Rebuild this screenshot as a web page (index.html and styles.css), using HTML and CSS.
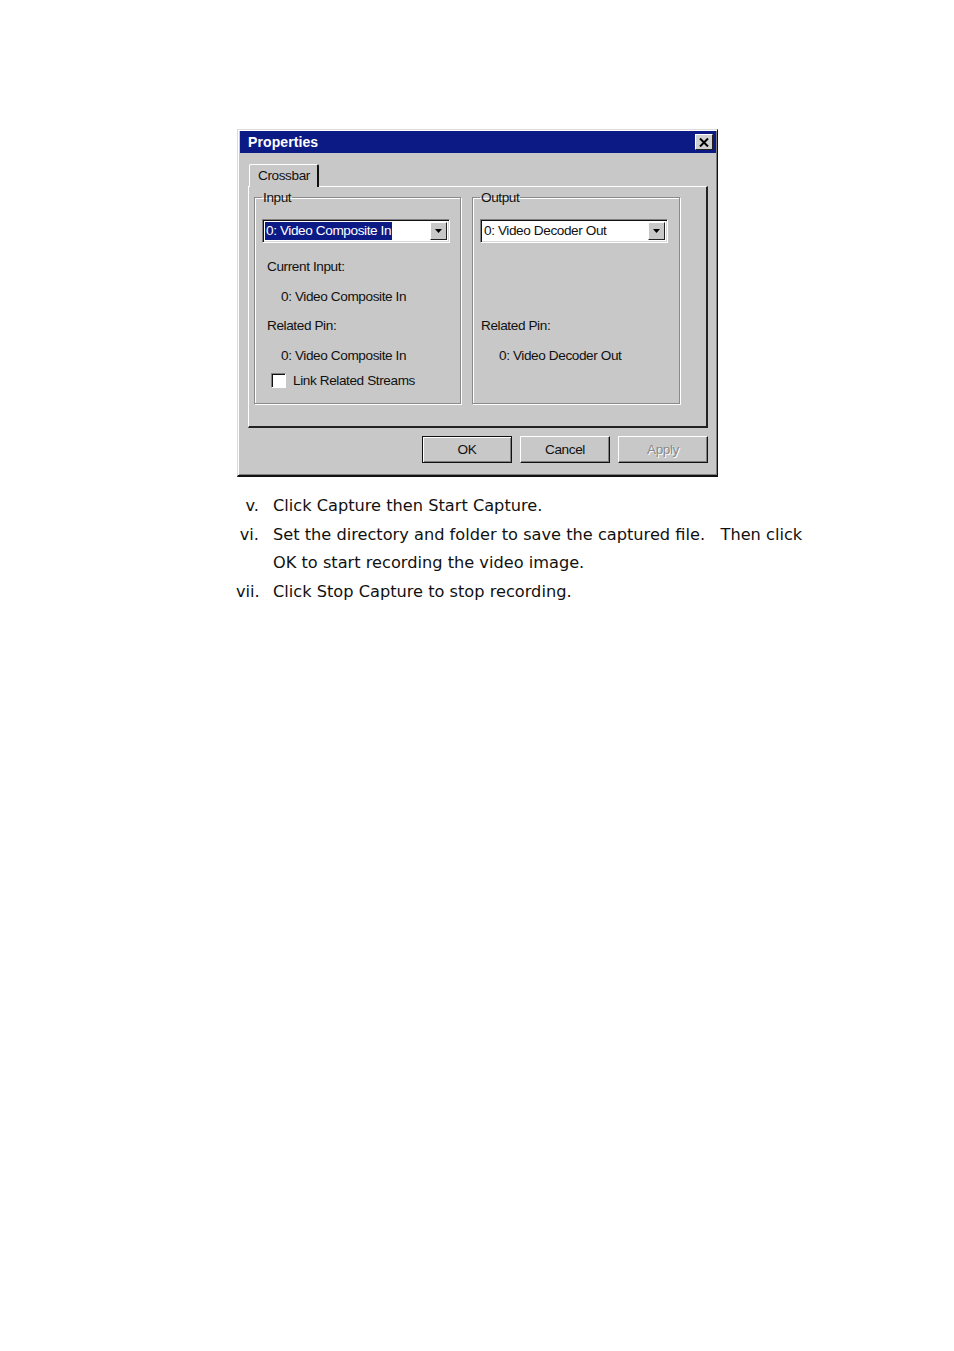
FILE: index.html
```html
<!DOCTYPE html>
<html>
<head>
<meta charset="utf-8">
<link rel="stylesheet" href="styles.css">
</head>
<body>
<div class="page">
  <div class="dialog">
    <div class="titlebar">
      <span class="title">Properties</span>
      <span class="closebtn"><svg width="10" height="9" viewBox="0 0 10 9"><path d="M1 0.5 L9 8.5 M9 0.5 L1 8.5" stroke="#000" stroke-width="2"/></svg></span>
    </div>
    <div class="dlgbody">
      <div class="tabs"><div class="tab">Crossbar</div></div>
      <div class="panel">
        <fieldset class="group group-in">
          <legend>Input</legend>
          <div class="combo"><span class="combo-text sel">0: Video Composite In</span><span class="dd"><svg width="8" height="5" viewBox="0 0 8 5"><path d="M0 0 H7 L3.5 4 Z" fill="#000"/></svg></span></div>
          <div class="rows">
            <div class="row lbl">Current Input:</div>
            <div class="row val">0: Video Composite In</div>
            <div class="row lbl">Related Pin:</div>
            <div class="row val">0: Video Composite In</div>
            <div class="row chk"><span class="box"></span>Link Related Streams</div>
          </div>
        </fieldset>
        <fieldset class="group group-out">
          <legend>Output</legend>
          <div class="combo"><span class="combo-text">0: Video Decoder Out</span><span class="dd"><svg width="8" height="5" viewBox="0 0 8 5"><path d="M0 0 H7 L3.5 4 Z" fill="#000"/></svg></span></div>
          <div class="rows out-rows">
            <div class="row lbl">Related Pin:</div>
            <div class="row val val-out">0: Video Decoder Out</div>
          </div>
        </fieldset>
      </div>
      <div class="buttons">
        <div class="btn btn-default">OK</div>
        <div class="btn">Cancel</div>
        <div class="btn disabled">Apply</div>
      </div>
    </div>
  </div>
  <div class="steps">
    <div class="step"><span class="num">v.</span><span class="txt">Click Capture then Start Capture.</span></div>
    <div class="step"><span class="num">vi.</span><span class="txt">Set the directory and folder to save the captured file.&nbsp;&nbsp; Then click OK to start recording the video image.</span></div>
    <div class="step"><span class="num">vii.</span><span class="txt">Click Stop Capture to stop recording.</span></div>
  </div>
</div>
</body>
</html>
```
FILE: styles.css
```css
html, body { margin: 0; padding: 0; background: #fff; }
.page { padding: 129px 0 0 237px; }

.dialog {
  width: 481px;
  height: 348px;
  box-sizing: border-box;
  background: #c8c8c8;
  border-top: 1px solid #dcdcdc;
  border-left: 1px solid #dcdcdc;
  border-right: 1px solid #111;
  border-bottom: 2px solid #111;
  box-shadow: inset 1px 1px 0 #fff, inset -1px -1px 0 #808080;
  padding: 1px 1px 0 2px;
  font-family: "Liberation Sans", Arial, sans-serif;
  font-size: 13.6px;
  letter-spacing: -0.4px;
  color: #111;
}

.titlebar {
  height: 22px;
  background: #0c1a86;
  display: flex;
  align-items: center;
  justify-content: space-between;
  padding: 0 3px 0 8px;
}
.title { color: #fff; font-weight: bold; font-size: 14px; letter-spacing: 0.1px; }
.closebtn {
  width: 18px; height: 16px;
  box-sizing: border-box;
  background: #d0d0d0;
  border-top: 1px solid #fff; border-left: 1px solid #fff;
  border-right: 1px solid #222; border-bottom: 1px solid #222;
  display: flex; align-items: center; justify-content: center;
}

.dlgbody { padding: 11px 0 0 8px; }
.tabs { display: flex; padding-left: 1px; }
.tab {
  height: 23px;
  box-sizing: border-box;
  padding: 3px 7px 0 8px;
  border-top: 1px solid #fff; border-left: 1px solid #fff;
  border-right: 2px solid #111;
  border-radius: 2px 2px 0 0;
  background: #c8c8c8;
  margin-bottom: -1px;
  position: relative;
  z-index: 1;
}

.panel {
  width: 460px;
  height: 242px;
  box-sizing: border-box;
  border-top: 1px solid #fff; border-left: 1px solid #fff;
  border-right: 2px solid #222; border-bottom: 2px solid #222;
  display: flex;
  gap: 11px;
  padding: 3px 0 0 5px;
}

.group {
  margin: 0;
  padding: 0;
  min-width: 0;
  height: 214px;
  box-sizing: border-box;
  border: 1px solid #8a8a8a;
  box-shadow: inset 1px 1px 0 #fff, 1px 1px 0 #fff;
}
.group legend { padding: 0 1px; margin-left: 7px; line-height: 15px; }
.group-in { width: 207px; }
.group-out { width: 208px; }

.combo {
  margin: 14px 0 0 7px;
  width: 188px;
  height: 24px;
  box-sizing: border-box;
  background: #fff;
  border-top: 1px solid #808080; border-left: 1px solid #808080;
  border-right: 1px solid #fff; border-bottom: 1px solid #fff;
  box-shadow: inset 1px 1px 0 #111, inset -1px -1px 0 #d8d8d8;
  display: flex; align-items: center; justify-content: space-between;
  padding: 0 2px 0 2px;
}
.combo-text { line-height: 18px; padding: 0 1px; }
.combo-text.sel { background: #0c1a86; color: #fff; }
.dd {
  width: 17px; height: 18px;
  box-sizing: border-box;
  background: #c8c8c8;
  border-top: 1px solid #fff; border-left: 1px solid #fff;
  border-right: 1px solid #222; border-bottom: 1px solid #222;
  display: flex; align-items: center; justify-content: center;
}

.rows { display: flex; flex-direction: column; padding: 15px 0 0 12px; }
.row { height: 29.5px; line-height: 18px; }
.val { padding-left: 14px; }
.chk { display: flex; align-items: flex-start; gap: 7px; padding-left: 4px; height: auto; margin-top: -4px; }
.box {
  width: 15px; height: 15px; box-sizing: border-box;
  background: #fff;
  border-top: 1px solid #808080; border-left: 1px solid #808080;
  border-right: 1px solid #fff; border-bottom: 1px solid #fff;
  box-shadow: inset 1px 1px 0 #111;
  margin-top: 1px;
}
.out-rows { padding-top: 74px; padding-left: 8px; }
.val-out { padding-left: 18px; }

.buttons { display: flex; justify-content: flex-end; gap: 8px; width: 460px; margin-top: 8px; }
.btn {
  width: 90px; height: 27px; box-sizing: border-box;
  border-top: 1px solid #fff; border-left: 1px solid #fff;
  border-right: 1px solid #111; border-bottom: 1px solid #111;
  box-shadow: inset -1px -1px 0 #808080;
  display: flex; align-items: center; justify-content: center;
}
.btn-default { border: 1px solid #111; box-shadow: inset 1px 1px 0 #fff, inset -1px -1px 0 #808080; }
.btn.disabled { color: #8a8a8a; text-shadow: 1px 1px 0 #fff; }

.steps {
  margin-top: 15px;
  width: 576px;
  font-family: "DejaVu Sans", Verdana, sans-serif;
  font-size: 16.2px;
  line-height: 28.7px;
  color: #111;
}
.step { display: grid; grid-template-columns: 23px 1fr; column-gap: 14px; margin-left: -1px; }
.num { text-align: right; }
```
